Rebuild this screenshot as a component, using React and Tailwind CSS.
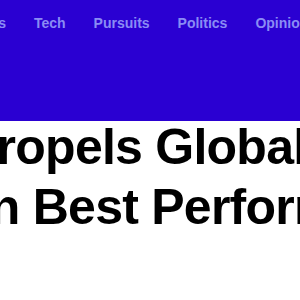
export default function App() {
  const nav = ["Markets", "Tech", "Pursuits", "Politics", "Opinion", "Businessweek"];

  return (
    <div className="w-[300px] h-[300px] overflow-hidden bg-white font-['Liberation_Sans',Arial,sans-serif]">
      <header className="h-[121px] bg-[#2a00d2]">
        <nav className="flex gap-[28px] pt-[14px] ml-[-47px] whitespace-nowrap">
          {nav.map((item) => (
            <span key={item} className="text-[14px] leading-[18px] font-bold text-[#8a8cf4]">
              {item}
            </span>
          ))}
        </nav>
      </header>
      <h1 className="mt-[-4px] ml-[-36px] whitespace-nowrap text-[50px] leading-[60px] font-bold text-black tracking-[-0.015em]">
        <div>Propels Global</div>
        <div className="ml-[-4px]">on Best Performance</div>
      </h1>
    </div>
  );
}
